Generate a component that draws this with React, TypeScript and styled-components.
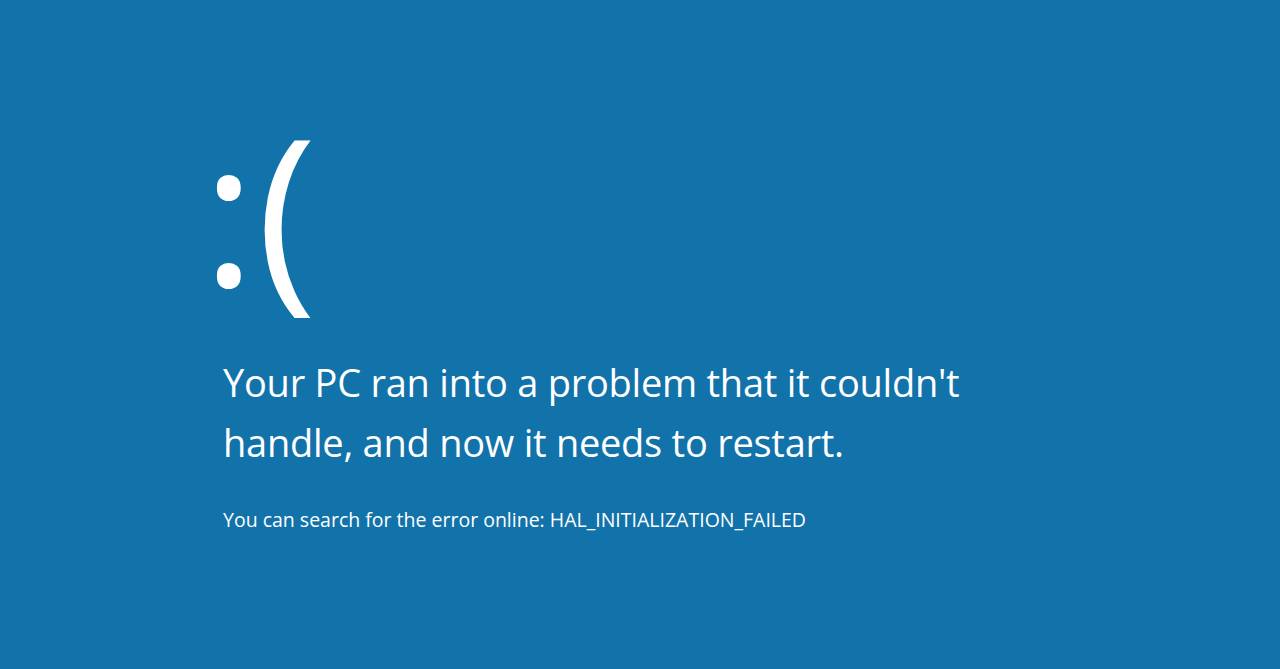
import styled, { createGlobalStyle } from "styled-components";

const GlobalStyle = createGlobalStyle`
  html, body {
    margin: 0;
    padding: 0;
    background: #1272aa;
  }
`;

const Screen = styled.div`
  width: 1280px;
  height: 669px;
  background: #1272aa;
  color: #ffffff;
  font-family: "Open Sans", "Noto Sans", sans-serif;
  overflow: hidden;
  padding: 97px 0 0 202px;
  box-sizing: border-box;
`;

const Face = styled.div`
  font-size: 204px;
  line-height: 220px;
  height: 220px;
  letter-spacing: 1px;
`;

const Message = styled.p`
  margin: 35px 0 0 21px;
  font-size: 38px;
  line-height: 60px;
  letter-spacing: -0.25px;
  width: 760px;
`;

const Detail = styled.p`
  margin: 35px 0 0 21px;
  font-size: 19.5px;
  line-height: 26px;
  letter-spacing: 0;
`;

export default function App() {
  return (
    <>
      <GlobalStyle />
      <Screen>
        <Face>:(</Face>
        <Message>
          Your PC ran into a problem that it couldn't
          <br />
          handle, and now it needs to restart.
        </Message>
        <Detail>You can search for the error online: HAL_INITIALIZATION_FAILED</Detail>
      </Screen>
    </>
  );
}
